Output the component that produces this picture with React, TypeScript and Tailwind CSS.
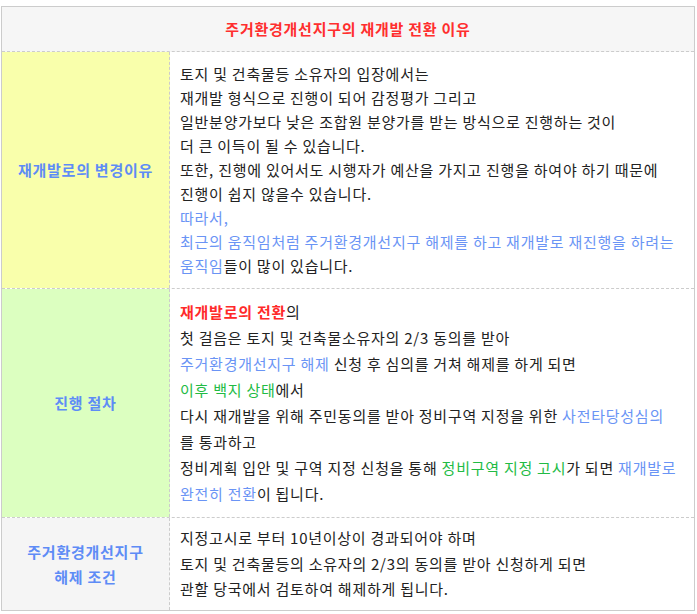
import React from "react";

const B = ({ children }: { children: React.ReactNode }) => <span className="text-[#6a94f5]">{children}</span>;
const G = ({ children }: { children: React.ReactNode }) => <span className="text-[#22bb44]">{children}</span>;
const R = ({ children }: { children: React.ReactNode }) => <span className="text-[#ff2a2a] font-bold">{children}</span>;

export default function App() {
  return (
    <div className="bg-white w-[697px] h-[614px] pt-[6px] pl-px" style={{ fontFamily: '"Noto Sans CJK KR", "Noto Sans", sans-serif' }}>
      <div className="w-[694px] border border-[#cccccc] text-[15px] tracking-[0.75px] text-[#222]">
        <div className="h-[45px] bg-[#f6f6f6] flex items-center justify-center border-b border-dashed border-[#cccccc] text-[#ff2e2e] font-bold">
          주거환경개선지구의 재개발 전환 이유
        </div>
        <div className="flex border-b border-dashed border-[#cccccc]">
          <div className="w-[168px] shrink-0 bg-[#f9ffab] border-r border-dashed border-[#cccccc] flex items-center justify-center font-bold text-[#5e8cf6]">
            재개발로의 변경이유
          </div>
          <div className="pl-[10px] pt-[10px] pb-[10px] leading-[24px] whitespace-nowrap">
            <div>토지 및 건축물등 소유자의 입장에서는</div>
            <div>재개발 형식으로 진행이 되어 감정평가 그리고</div>
            <div>일반분양가보다 낮은 조합원 분양가를 받는 방식으로 진행하는 것이</div>
            <div>더 큰 이득이 될 수 있습니다.</div>
            <div>또한, 진행에 있어서도 시행자가 예산을 가지고 진행을 하여야 하기 때문에</div>
            <div>진행이 쉽지 않을수 있습니다.</div>
            <div><B>따라서,</B></div>
            <div><B>최근의 움직임처럼 주거환경개선지구 해제를 하고 재개발로 재진행을 하려는</B></div>
            <div><B>움직임</B>들이 많이 있습니다.</div>
          </div>
        </div>
        <div className="flex border-b border-dashed border-[#cccccc]">
          <div className="w-[168px] shrink-0 bg-[#dcffc0] border-r border-dashed border-[#cccccc] flex items-center justify-center font-bold text-[#5e8cf6]">
            진행 절차
          </div>
          <div className="pl-[10px] pt-[10px] pb-[10px] leading-[26px] whitespace-nowrap">
            <div><R>재개발로의 전환</R>의</div>
            <div>첫 걸음은 토지 및 건축물소유자의 2/3 동의를 받아</div>
            <div><B>주거환경개선지구 해제</B> 신청 후 심의를 거쳐 해제를 하게 되면</div>
            <div><G>이후 백지 상태</G>에서</div>
            <div>다시 재개발을 위해 주민동의를 받아 정비구역 지정을 위한 <B>사전타당성심의</B></div>
            <div>를 통과하고</div>
            <div>정비계획 입안 및 구역 지정 신청을 통해 <G>정비구역 지정 고시</G>가 되면 <B>재개발로</B></div>
            <div><B>완전히 전환</B>이 됩니다.</div>
          </div>
        </div>
        <div className="flex">
          <div className="w-[168px] shrink-0 bg-[#f5f5f5] border-r border-dashed border-[#cccccc] flex flex-col items-center justify-center font-bold text-[#5e8cf6] leading-[25px]">
            <div>주거환경개선지구</div>
            <div>해제 조건</div>
          </div>
          <div className="pl-[10px] pt-[7px] pb-[8px] leading-[25.5px] whitespace-nowrap">
            <div>지정고시로 부터 10년이상이 경과되어야 하며</div>
            <div>토지 및 건축물등의 소유자의 2/3의 동의를 받아 신청하게 되면</div>
            <div>관할 당국에서 검토하여 해제하게 됩니다.</div>
          </div>
        </div>
      </div>
    </div>
  );
}
